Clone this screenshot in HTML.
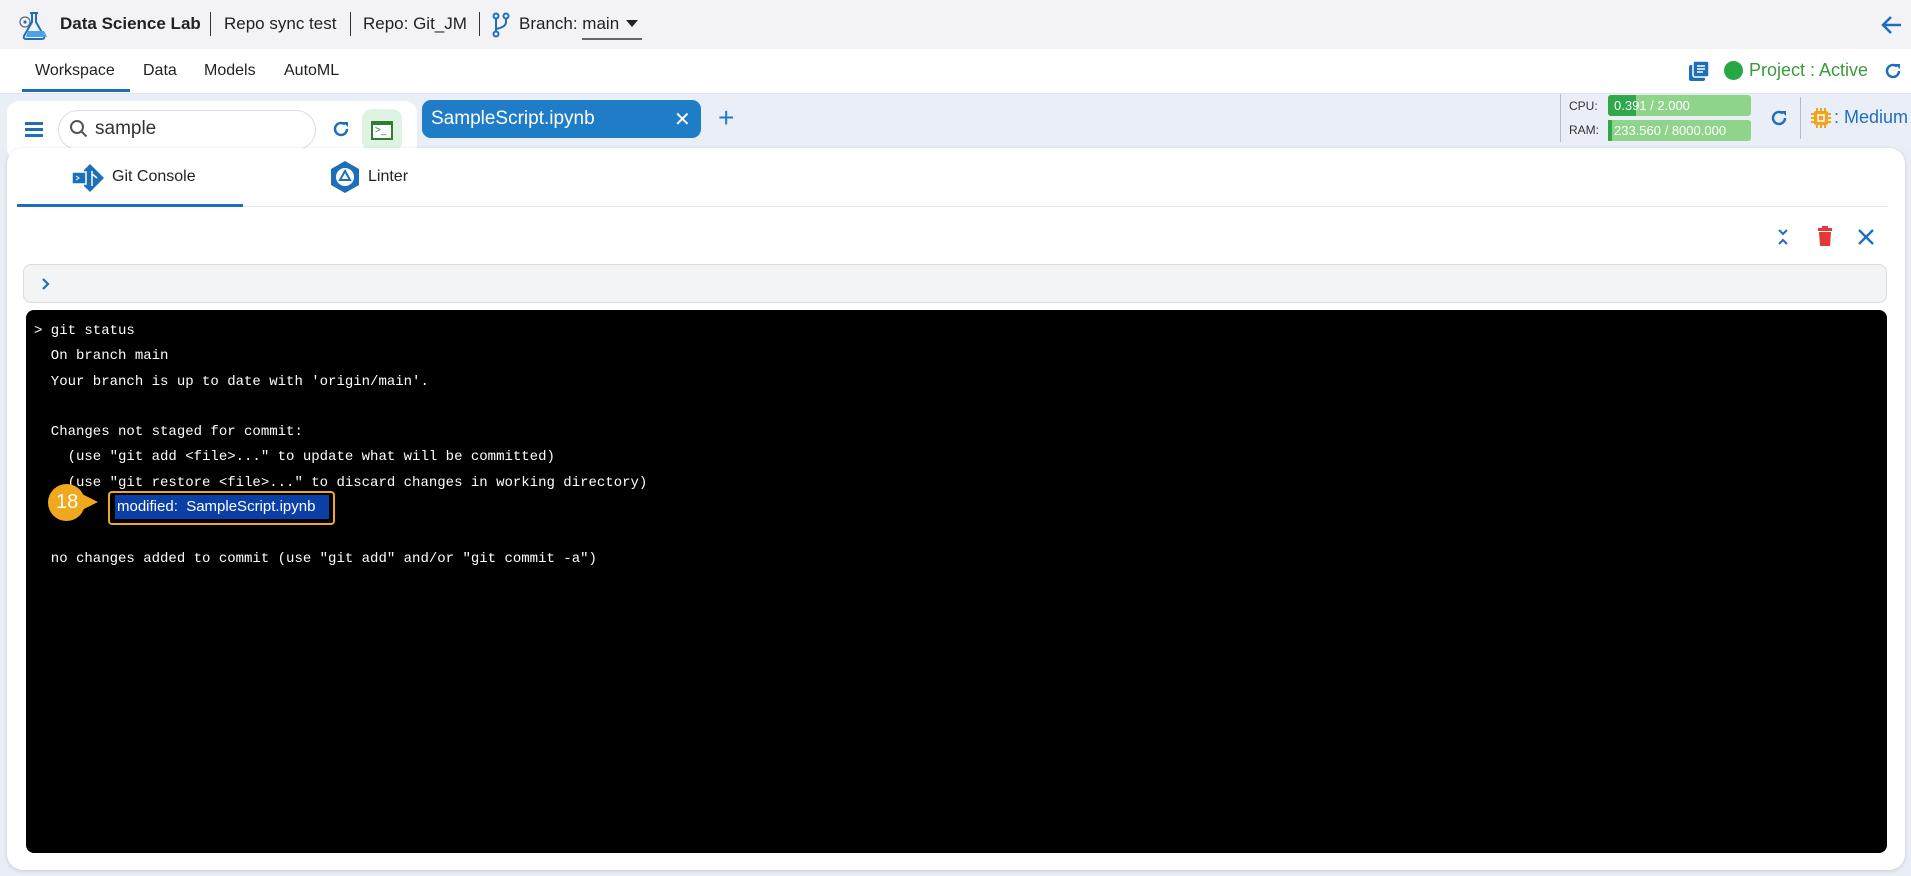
<!DOCTYPE html>
<html><head><meta charset="utf-8"><style>
*{box-sizing:border-box;margin:0;padding:0}
body{width:1911px;height:876px;overflow:hidden;background:#e9edf5;font-family:"Liberation Sans",sans-serif;position:relative;color:#222}
.abs{position:absolute}
.top{left:0;top:0;width:1911px;height:49px;background:#f3f3f5}
.nav{left:0;top:49px;width:1911px;height:45px;background:#fff;border-bottom:1px solid #e0e3ea}
.tb{left:0;top:94px;width:1911px;height:54px;background:#eaeef7}
.term{font-family:"Liberation Mono",monospace;font-size:14px;color:#fff;white-space:pre}
</style></head><body>
<div class="abs top"></div>
<svg class="abs" style="left:16px;top:9px" width="32" height="32" viewBox="0 0 32 32"><path d="M14 4h8M16 4v9l-8 14q-1 3 2 3h16q3 0 2-3l-8-14V4" fill="none" stroke="#1e6fba" stroke-width="2"/><path d="M12 22h16l3 6H10z" fill="#4aa3e6"/><circle cx="9" cy="13" r="5" fill="none" stroke="#5a6a8a" stroke-width="1.3"/><circle cx="9" cy="13" r="1.6" fill="#1e6fba"/></svg>
<div class="abs" style="left:60px;top:14px;font-size:17px;font-weight:bold;color:#222">Data Science Lab</div>
<div class="abs" style="left:210px;top:12px;width:1px;height:24px;background:#333"></div>
<div class="abs" style="left:224px;top:14px;font-size:17px">Repo sync test</div>
<div class="abs" style="left:350px;top:12px;width:1px;height:24px;background:#333"></div>
<div class="abs" style="left:363px;top:14px;font-size:17px">Repo: Git_JM</div>
<div class="abs" style="left:479px;top:12px;width:1px;height:24px;background:#333"></div>
<svg class="abs" style="left:492px;top:12px" width="18" height="26" viewBox="0 0 18 26"><g fill="none" stroke="#1e6fba" stroke-width="2"><circle cx="4" cy="4" r="2.5"/><circle cx="14" cy="4" r="2.5"/><circle cx="4" cy="22" r="2.5"/><path d="M4 7v12M14 7v3q0 5-10 7"/></g></svg>
<div class="abs" style="left:519px;top:14px;font-size:17px">Branch: main</div>
<div class="abs" style="left:626px;top:20px;border-left:6px solid transparent;border-right:6px solid transparent;border-top:7px solid #222"></div>
<div class="abs" style="left:582px;top:38px;width:60px;height:2px;background:#666"></div>
<svg class="abs" style="left:1880px;top:13px" width="24" height="24" viewBox="0 0 24 24"><path d="M21 12H4M11 4l-8 8 8 8" fill="none" stroke="#1e6fba" stroke-width="2.5"/></svg>

<div class="abs nav"></div>
<div class="abs" style="left:35px;top:62px;font-size:16px">Workspace</div>
<div class="abs" style="left:143px;top:62px;font-size:16px">Data</div>
<div class="abs" style="left:204px;top:62px;font-size:16px">Models</div>
<div class="abs" style="left:284px;top:62px;font-size:16px">AutoML</div>
<div class="abs" style="left:22px;top:89px;width:108px;height:3px;background:#1e6fba"></div>
<svg class="abs" style="left:1687px;top:59px" width="24" height="24" viewBox="0 0 24 24"><rect x="2" y="6" width="16" height="16" rx="2" fill="#1e6fba"/><rect x="6" y="2" width="16" height="16" rx="2" fill="#1e6fba" stroke="#fff" stroke-width="1.5"/><path d="M10 7h8M10 10h8M10 13h6" stroke="#fff" stroke-width="1.5"/></svg>
<div class="abs" style="left:1724px;top:61px;width:19px;height:19px;border-radius:50%;background:#28a745"></div>
<div class="abs" style="left:1749px;top:60px;font-size:18px;color:#3c9a3c">Project : Active</div>
<svg class="abs" style="left:1883px;top:61px" width="20" height="20" viewBox="0 0 20 20"><path d="M16 10a6 6 0 1 1-2-4.5" fill="none" stroke="#1e6fba" stroke-width="2.5"/><path d="M12 3l5 0 0 5z" fill="#1e6fba"/></svg>

<div class="abs tb"></div>
<div class="abs" style="left:7px;top:101px;width:410px;height:60px;background:#fff;border-radius:12px"></div>
<div class="abs" style="left:25px;top:122px;width:18px;height:2.5px;background:#1e6fba;box-shadow:0 6px 0 #1e6fba,0 12px 0 #1e6fba"></div>
<div class="abs" style="left:58px;top:110px;width:258px;height:40px;border:1px solid #ddd;border-radius:20px;background:#fff"></div>
<svg class="abs" style="left:69px;top:119px" width="20" height="20" viewBox="0 0 20 20"><circle cx="8" cy="8" r="6" fill="none" stroke="#555" stroke-width="2"/><path d="M12.5 12.5l5 5" stroke="#555" stroke-width="2"/></svg>
<div class="abs" style="left:95px;top:118px;font-size:19px;color:#333">sample</div>
<svg class="abs" style="left:331px;top:119px" width="20" height="20" viewBox="0 0 20 20"><path d="M16 10a6 6 0 1 1-2-4.5" fill="none" stroke="#1e6fba" stroke-width="2.5"/><path d="M12 3l5 0 0 5z" fill="#1e6fba"/></svg>
<div class="abs" style="left:362px;top:109px;width:40px;height:42px;border-radius:10px;background:#dff3e2"></div>
<div class="abs" style="left:371px;top:121px;width:22px;height:19px;border:2px solid #2e7d32;border-top-width:4px;background:#fff;font-size:10px;color:#2e7d32;line-height:11px;padding-left:2px">&gt;_</div>
<div class="abs" style="left:422px;top:100px;width:279px;height:38px;background:#1e7dc6;border-radius:9px"></div>
<div class="abs" style="left:431px;top:108px;font-size:19px;color:#fff">SampleScript.ipynb</div>
<div class="abs" style="left:674px;top:107px;font-size:20px;color:#fff">✕</div>
<div class="abs" style="left:718px;top:104px;font-size:28px;color:#1e7dc6;line-height:28px">+</div>
<div class="abs" style="left:1560px;top:94px;width:1px;height:48px;background:#bbb"></div>
<div class="abs" style="left:1569px;top:99px;font-size:12px;color:#333">CPU:</div>
<div class="abs" style="left:1569px;top:123px;font-size:12px;color:#333">RAM:</div>
<div class="abs" style="left:1608px;top:95px;width:143px;height:21px;background:#8fd48b;border-radius:3px"></div>
<div class="abs" style="left:1608px;top:95px;width:28px;height:21px;background:#2fa84a;border-radius:3px 0 0 3px"></div>
<div class="abs" style="left:1614px;top:98px;font-size:13px;color:#fff">0.391 / 2.000</div>
<div class="abs" style="left:1608px;top:120px;width:143px;height:21px;background:#8fd48b;border-radius:3px"></div>
<div class="abs" style="left:1608px;top:120px;width:4px;height:21px;background:#2fa84a"></div>
<div class="abs" style="left:1614px;top:123px;font-size:13px;color:#fff">233.560 / 8000.000</div>
<svg class="abs" style="left:1769px;top:108px" width="20" height="20" viewBox="0 0 20 20"><path d="M16 10a6 6 0 1 1-2-4.5" fill="none" stroke="#1e6fba" stroke-width="2.5"/><path d="M12 3l5 0 0 5z" fill="#1e6fba"/></svg>
<div class="abs" style="left:1800px;top:97px;width:1px;height:42px;background:#bbb"></div>
<svg class="abs" style="left:1810px;top:107px" width="22" height="22" viewBox="0 0 22 22"><g stroke="#f2a31b" stroke-width="2"><path d="M7 1v4M11 1v4M15 1v4M7 17v4M11 17v4M15 17v4M1 7h4M1 11h4M1 15h4M17 7h4M17 11h4M17 15h4"/></g><rect x="4" y="4" width="14" height="14" rx="2" fill="#f2a31b"/><rect x="8" y="8" width="6" height="6" fill="none" stroke="#fff" stroke-width="1.5"/></svg>
<div class="abs" style="left:1834px;top:107px;font-size:18px;color:#1e6fba">: Medium</div>

<div class="abs" style="left:7px;top:148px;width:1898px;height:722px;background:#fff;border-radius:16px;box-shadow:0 1px 4px rgba(0,0,0,.15)"></div>
<svg class="abs" style="left:70px;top:162px" width="36" height="32" viewBox="0 0 36 32"><path d="M20 2l14 14-14 14-6-6V8z" fill="#1e6fba"/><rect x="2" y="10" width="14" height="12" fill="#1e6fba" stroke="#fff" stroke-width="1.5"/><path d="M6 14l3 2-3 2" stroke="#fff" fill="none"/><path d="M22 9v15M22 12l5 4" stroke="#fff" stroke-width="1.5"/></svg>
<div class="abs" style="left:112px;top:168px;font-size:16px">Git Console</div>
<svg class="abs" style="left:328px;top:160px" width="34" height="34" viewBox="0 0 34 34"><path d="M17 1l14 8v16l-14 8-14-8V9z" fill="#1e6fba"/><circle cx="17" cy="17" r="9" fill="#fff"/><path d="M17 11l5 9h-10z" fill="none" stroke="#1e6fba" stroke-width="2"/></svg>
<div class="abs" style="left:368px;top:168px;font-size:16px">Linter</div>
<div class="abs" style="left:17px;top:206px;width:1870px;height:1px;background:#e3e3e3"></div>
<div class="abs" style="left:17px;top:204px;width:226px;height:3px;background:#1e6fba"></div>
<svg class="abs" style="left:1775px;top:227px" width="16" height="20" viewBox="0 0 16 20"><path d="M4 3l4 4 4-4M4 17l4-4 4 4" fill="none" stroke="#1e6fba" stroke-width="2"/></svg>
<svg class="abs" style="left:1817px;top:225px" width="16" height="22" viewBox="0 0 16 22"><rect x="1" y="3" width="14" height="3" fill="#e53935"/><rect x="5" y="1" width="6" height="3" fill="#e53935"/><path d="M2 7h12l-1 14H3z" fill="#e53935"/></svg>
<svg class="abs" style="left:1857px;top:228px" width="18" height="18" viewBox="0 0 18 18"><path d="M2 2l14 14M16 2L2 16" stroke="#1e6fba" stroke-width="2.3"/></svg>
<div class="abs" style="left:23px;top:264px;width:1864px;height:39px;background:#f3f4f6;border:1px solid #dcdcdc;border-radius:8px"></div>
<svg class="abs" style="left:40px;top:277px" width="12" height="14" viewBox="0 0 12 14"><path d="M3 2l5 5-5 5" fill="none" stroke="#1e6fba" stroke-width="2.2"/></svg>
<div class="abs" style="left:26px;top:310px;width:1861px;height:543px;background:#000;border-radius:8px"></div>
<div class="abs term" style="left:34px;top:319px;line-height:25.3px">&gt; git status
  On branch main
  Your branch is up to date with 'origin/main'.

  Changes not staged for commit:
    (use "git add &lt;file&gt;..." to update what will be committed)
    (use "git restore &lt;file&gt;..." to discard changes in working directory)


  no changes added to commit (use "git add" and/or "git commit -a")</div>
<div class="abs" style="left:108px;top:491px;width:227px;height:34px;border:2px solid #f0a91e;border-radius:4px"></div>
<div class="abs" style="left:115px;top:495px;width:214px;height:24px;background:#0b3fa8"></div>
<div class="abs" style="left:117px;top:498px;font-size:15px;color:#fff;white-space:pre">modified:  SampleScript.ipynb</div>
<div class="abs" style="left:48px;top:484px;width:37px;height:37px;border-radius:50%;background:#f0a91e"></div>
<div class="abs" style="left:80px;top:493px;border-top:9px solid transparent;border-bottom:9px solid transparent;border-left:18px solid #f0a91e"></div>
<div class="abs" style="left:56px;top:491px;font-size:20px;color:#fff">18</div>
</body></html>
